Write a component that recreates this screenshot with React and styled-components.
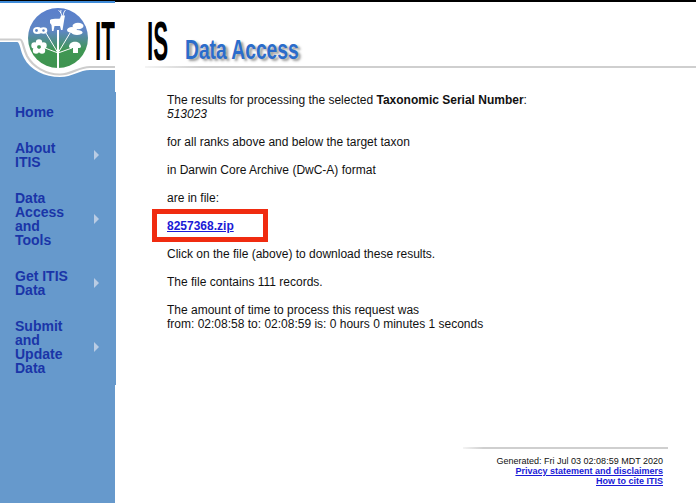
import styled, { createGlobalStyle } from "styled-components";

const GlobalStyle = createGlobalStyle`
  html, body {
    margin: 0;
    padding: 0;
    height: 100%;
    background: #fff;
    overflow: hidden;
  }
  body {
    font-family: "Liberation Sans", Arial, sans-serif;
    color: #111;
  }
`;

const Page = styled.div`
  display: flex;
  height: 503px;
`;

const Sidebar = styled.aside`
  width: 115px;
  flex: none;
  display: flex;
  flex-direction: column;
  background: #6699cc;
`;

const LogoBanner = styled.div`
  position: relative;
  height: 92px;
  svg {
    display: block;
  }
`;

const LogoText = styled.span`
  position: absolute;
  left: 95px;
  top: 13px;
  font-size: 56px;
  line-height: 56px;
  font-weight: 700;
  color: #000;
  transform-origin: left top;
  transform: scaleX(0.4);
`;

const NavList = styled.ul`
  list-style: none;
  margin: 0;
  padding: 2px 0 0;
  width: 116px;
  height: 293px;
  box-sizing: border-box;
  background: #6699cc;
  display: flex;
  flex-direction: column;
`;

const NavItem = styled.li`
  display: flex;
  align-items: center;
  justify-content: space-between;
  padding: 11px 17px 11px 15px;
  font-size: 14px;
  line-height: 14px;
  font-weight: 700;
  color: #1a35a8;
`;

const NavLabel = styled.span`
  width: 60px;
`;

const Arrow = styled.i`
  width: 0;
  height: 0;
  border-left: 5px solid #b9cce4;
  border-top: 5px solid transparent;
  border-bottom: 5px solid transparent;
`;

const Main = styled.main`
  flex: 1;
  display: flex;
  flex-direction: column;
  min-width: 0;
  border-top: 2px solid #000;
`;

const Header = styled.header`
  display: flex;
  align-items: flex-start;
  height: 64px;
  padding-left: 32px;
`;

const HeaderLogo = styled.span`
  width: 38px;
  margin-top: 11px;
  font-size: 56px;
  line-height: 56px;
  font-weight: 700;
  color: #000;
  transform-origin: left top;
  transform: scaleX(0.4);
`;

const Title = styled.h1`
  margin: 34px 0 0;
  font-size: 28px;
  line-height: 28px;
  font-weight: 700;
  color: #2b6ccb;
  white-space: nowrap;
  text-shadow: 4px 2px 3px #9a9a9a;
  transform-origin: left top;
  transform: scaleX(0.687);
`;

const Rule = styled.div`
  height: 2px;
  background: linear-gradient(to right, #f4f4f4, #cfcfcf 10%, #cfcfcf);
  margin-left: ${(p) => p.$left}px;
  margin-right: ${(p) => p.$right}px;
`;

const Content = styled.section`
  flex: 1;
  padding: 25px 0 0 52px;
  font-size: 12px;
  line-height: 14px;
`;

const Para = styled.p`
  margin: 0 0 14px;
`;

const FileRow = styled.p`
  position: relative;
  margin: 0 0 14px;
  &::after {
    content: "";
    position: absolute;
    left: -15px;
    top: -10px;
    width: 116px;
    height: 33px;
    box-sizing: border-box;
    border: 5px solid #f02b10;
  }
`;

const FileLink = styled.a`
  color: #1a1ad6;
  font-weight: 700;
  text-decoration: underline;
`;

const Footer = styled.footer`
  display: flex;
  flex-direction: column;
  padding-bottom: 17px;
`;

const FooterText = styled.div`
  margin-top: 7px;
  padding-right: 33px;
  text-align: right;
  font-size: 9px;
  line-height: 10px;
`;

const FooterLink = styled.a`
  display: block;
  color: #1a1ad6;
  font-weight: 700;
  text-decoration: underline;
`;

function Logo() {
  return (
    <svg width="115" height="92" viewBox="0 0 115 92">
      <defs>
        <linearGradient id="globe" x1="0" y1="0" x2="0" y2="1">
          <stop offset="0" stopColor="#5a7fcc" />
          <stop offset="0.38" stopColor="#5f86c4" />
          <stop offset="0.7" stopColor="#3f9753" />
          <stop offset="1" stopColor="#3f9450" />
        </linearGradient>
      </defs>
      <rect width="115" height="92" fill="#fff" />
      <rect width="115" height="1" fill="#000" />
      <rect y="1" width="115" height="2" fill="#3f8bd8" />
      <path d="M0 42H17C20 42 20 50 24 58C30 70 45 77 60 77C72 77 80 70 90 70H115V92H0Z" fill="#6699cc" />
      <path
        d="M0 39.5H20C23 39.5 23 48 27 56C33 67 46 74.5 60 74.5C72 74.5 78 67 90 67H115"
        fill="none"
        stroke="#cdcdcd"
        strokeWidth="2.2"
      />
      <circle cx="58" cy="38" r="30" fill="url(#globe)" />
      <g stroke="#fff" fill="none">
        <path d="M58 68V30" strokeWidth="2" />
        <path d="M58 53L46 33M58 53L70 33M58 53L45 48M58 53L72 48" strokeWidth="1" />
      </g>
      <g fill="#fff">
        <path d="M50 20C52 18 58 19 60 18.5L61 15.5L65 15.5L64.5 18L63.5 24L62.5 30H61L60 26L54.5 26L53.5 31H52L51.5 25L50 23Z" />
        <path d="M62 16L60.5 12L58.5 10.5M60.5 13L61 10M63 16L64 12L65.5 10" stroke="#fff" strokeWidth="0.9" fill="none" />
        <ellipse cx="37.5" cy="30.5" rx="4.5" ry="3.5" />
        <ellipse cx="43.5" cy="30.5" rx="3.8" ry="3.2" />
        <circle cx="34.5" cy="45.5" r="3.2" />
        <circle cx="43.5" cy="45.5" r="3.2" />
        <circle cx="39" cy="42.5" r="3.2" />
        <circle cx="36" cy="50.5" r="3.2" />
        <circle cx="42" cy="50.5" r="3.2" />
        <ellipse cx="78" cy="26" rx="5.5" ry="3.2" />
        <ellipse cx="72" cy="30" rx="5" ry="3" />
        <ellipse cx="77" cy="32.5" rx="5.5" ry="2.6" />
        <path d="M69 47C69 40 81 40 81 47C81 48 78 48 78 48V53H73V48C72 48 69 48 69 47Z" />
      </g>
      <circle cx="36.5" cy="30.5" r="1.4" fill="#5f86c4" />
      <circle cx="43.5" cy="30.5" r="1.2" fill="#5f86c4" />
      <circle cx="39" cy="47" r="1.8" fill="#3f9753" />
    </svg>
  );
}

const navItems = [
  { label: "Home" },
  { label: "About ITIS", more: true },
  { label: "Data Access and Tools", more: true },
  { label: "Get ITIS Data", more: true },
  { label: "Submit and Update Data", more: true },
];

export default function App() {
  return (
    <>
      <GlobalStyle />
      <Page>
        <Sidebar>
          <LogoBanner>
            <Logo />
            <LogoText>IT</LogoText>
          </LogoBanner>
          <NavList>
            {navItems.map((item) => (
              <NavItem key={item.label}>
                <NavLabel>{item.label}</NavLabel>
                {item.more && <Arrow />}
              </NavItem>
            ))}
          </NavList>
        </Sidebar>
        <Main>
          <Header>
            <HeaderLogo>IS</HeaderLogo>
            <Title>Data Access</Title>
          </Header>
          <Rule $left={30} $right={0} />
          <Content>
            <Para>
              The results for processing the selected <b>Taxonomic Serial Number</b>:
              <br />
              <i>513023</i>
            </Para>
            <Para>for all ranks above and below the target taxon</Para>
            <Para>in Darwin Core Archive (DwC-A) format</Para>
            <Para>are in file:</Para>
            <FileRow>
              <FileLink href="#">8257368.zip</FileLink>
            </FileRow>
            <Para>Click on the file (above) to download these results.</Para>
            <Para>The file contains 111 records.</Para>
            <Para>
              The amount of time to process this request was
              <br />
              from: 02:08:58 to: 02:08:59 is: 0 hours 0 minutes 1 seconds
            </Para>
          </Content>
          <Footer>
            <Rule $left={348} $right={28} />
            <FooterText>
              Generated: Fri Jul 03 02:08:59 MDT 2020
              <FooterLink href="#">Privacy statement and disclaimers</FooterLink>
              <FooterLink href="#">How to cite ITIS</FooterLink>
            </FooterText>
          </Footer>
        </Main>
      </Page>
    </>
  );
}
